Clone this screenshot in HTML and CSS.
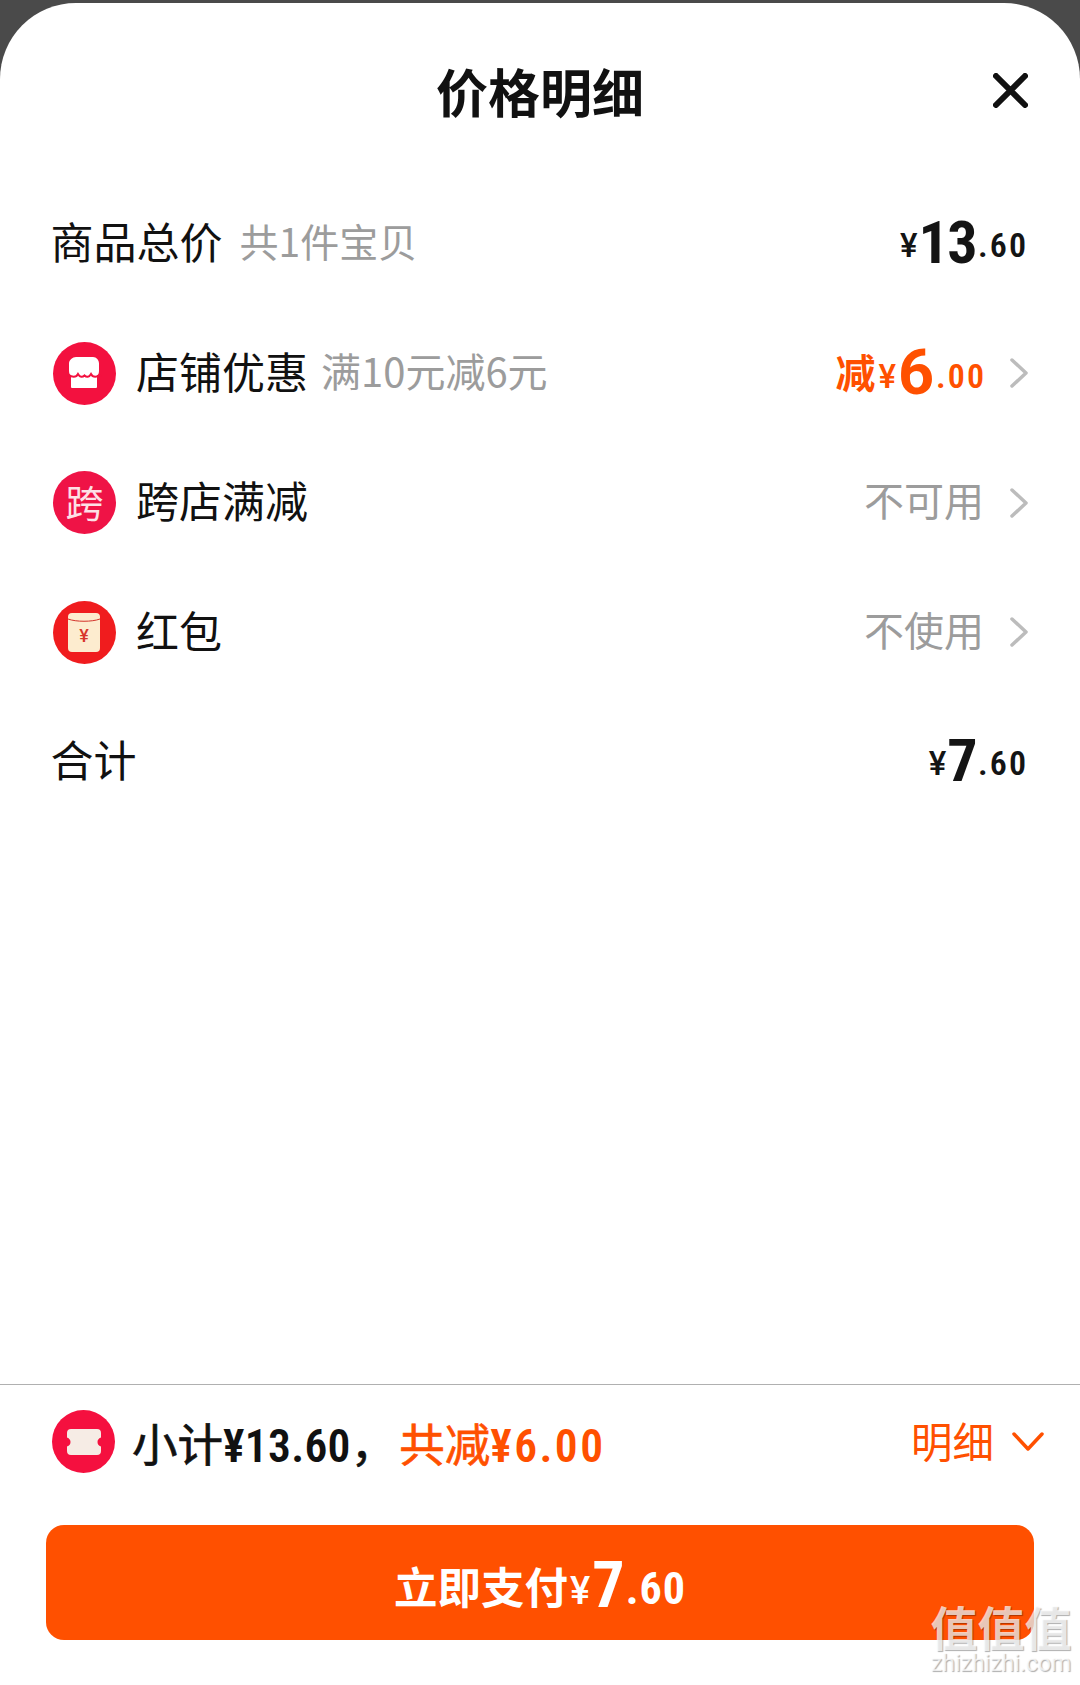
FILE: index.html
```html
<!DOCTYPE html>
<html lang="zh-CN">
<head>
<meta charset="utf-8">
<title>价格明细</title>
<link rel="stylesheet" href="styles.css">
</head>
<body>
<main class="sheet">
  <header class="head">
    <h1 class="title">价格明细</h1>
    <svg class="close" viewBox="0 0 35 35"><path d="M3 3 32 32M32 3 3 32"/></svg>
  </header>
  <section class="list">
    <div class="row">
      <div class="left"><span class="label plain">商品总价</span><span class="sub">共1件宝贝</span></div>
      <div class="right"><span class="amount"><span class="cur">¥</span><span class="big">13</span><span class="dec">.60</span></span></div>
    </div>
    <div class="row">
      <div class="left">
        <svg class="badge" viewBox="0 0 63 63"><circle cx="31.5" cy="31.5" r="31.5" fill="#f3113f"/><path fill="#fff" d="M23 15h17c3.500 0 6 3 6 6.500V29c0 3-1.500 4-1.500 4H44v12a1 1 0 0 1-1 1H19a1 1 0 0 1-1-1V33h-.5S16 32 16 29v-7.500C16 18 19.500 15 23 15z"/><path fill="none" stroke="#f3113f" stroke-width="2" d="M15 33c4 2 8 3 10-1 2 3.500 4.500 3.500 6.500 1.500 2 2 4.500 2 6.500-1.500 2 4 6 3 10 1"/></svg>
        <span class="label">店铺优惠</span><span class="sub sub-wide">满10元减6元</span>
      </div>
      <div class="right"><span class="amount hot"><span class="jian">减</span><span class="cur">¥</span><span class="big">6</span><span class="dec">.00</span></span><svg class="chev" viewBox="0 0 18 30"><path d="M2 2 16 15 2 28"/></svg></div>
    </div>
    <div class="row">
      <div class="left">
        <span class="badge kua">跨</span>
        <span class="label">跨店满减</span>
      </div>
      <div class="right"><span class="state">不可用</span><svg class="chev" viewBox="0 0 18 30"><path d="M2 2 16 15 2 28"/></svg></div>
    </div>
    <div class="row">
      <div class="left">
        <svg class="badge" viewBox="0 0 63 63"><circle cx="31.5" cy="31.5" r="31.5" fill="#f01c1e"/><rect x="15" y="12" width="32" height="39" rx="4" fill="#fdeccf"/><path d="M15 18c8 3 24 3 32 0" fill="none" stroke="#d4322a" stroke-width="1"/><text x="31" y="41" class="yen">¥</text></svg>
        <span class="label">红包</span>
      </div>
      <div class="right"><span class="state">不使用</span><svg class="chev" viewBox="0 0 18 30"><path d="M2 2 16 15 2 28"/></svg></div>
    </div>
    <div class="row">
      <div class="left"><span class="label plain">合计</span></div>
      <div class="right"><span class="amount"><span class="cur">¥</span><span class="big">7</span><span class="dec">.60</span></span></div>
    </div>
  </section>
  <footer class="foot">
    <div class="summary">
      <div class="sum-left">
        <svg class="badge" viewBox="0 0 63 63"><circle cx="31.500" cy="31.500" r="31.500" fill="#f5103f"/><path fill="#f6ece5" d="M19 19h26a4 4 0 0 1 4 4v4.500c-2.500 1-3.500 2.500-3.500 4.500s1 3.500 3.500 4.500V41a4 4 0 0 1-4 4H19a4 4 0 0 1-4-4v-4.500c2.500-1 3.500-2.500 3.500-4.500s-1-3.500-3.500-4.500V23a4 4 0 0 1 4-4z"/></svg>
        <span class="sum-text">小计<span class="sum-num">¥13.60</span>，<span class="sum-hot">共减<span class="sum-num">¥6.00</span></span></span>
      </div>
      <div class="detail"><span>明细</span><svg class="chev-down" viewBox="0 0 32 20"><path d="M2 2 16 17 30 2"/></svg></div>
    </div>
    <button class="pay"><span class="pay-zh">立即支付</span><span class="pay-cur">¥</span><span class="pay-big">7</span><span class="pay-dec">.60</span></button>
  </footer>
  <div class="mark"><div class="mark-zh">值值值</div><div class="mark-en">zhizhizhi.com</div></div>
</main>
</body>
</html>
```
FILE: styles.css
```css
* { box-sizing: border-box; }
html, body { margin: 0; height: 1685px; }
body {
  width: 1080px;
  background: #4a4a4a;
  padding-top: 3px;
  font-family: "Noto Sans CJK SC", "Noto Sans", sans-serif;
  color: #111;
  overflow: hidden;
}
.sheet {
  position: relative;
  height: 1682px;
  background: #fff;
  border-radius: 76px 76px 0 0;
  display: flex;
  flex-direction: column;
}
.head {
  position: relative;
  height: 176px;
  padding-top: 53px;
  text-align: center;
}
.title {
  margin: 0;
  font-size: 52px;
  line-height: 70px;
  font-weight: 700;
}
.close {
  position: absolute;
  top: 70px;
  right: 52px;
  width: 35px;
  height: 35px;
  fill: none;
  stroke: #111;
  stroke-width: 6;
  stroke-linecap: round;
}
.list { display: flex; flex-direction: column; }
.row {
  height: 129.500px;
  padding: 0 52px;
  display: flex;
  align-items: center;
  justify-content: space-between;
}
.left { display: flex; align-items: center; }
.right { display: flex; align-items: center; }
.label { font-size: 43px; line-height: 60px; margin-top: -7px; }
.plain { margin-left: -1.500px; }
.sub { margin-left: 17px; font-size: 39px; line-height: 60px; color: #9c9c9c; margin-top: -7px; }
.sub-wide { margin-left: 13px; font-size: 40px; }
.badge {
  width: 63px;
  height: 63px;
  flex: none;
  margin-right: 20px;
  margin-left: 1px;
}
.kua {
  border-radius: 50%;
  background: #ef1346;
  color: #fde0e6;
  font-size: 38px;
  line-height: 60px;
  text-align: center;
}
.yen { font-family: "Roboto", sans-serif; font-size: 18px; font-weight: 500; fill: #d8352c; text-anchor: middle; }
.amount {
  display: block;
  margin-top: 7px;
  font-family: "Roboto", sans-serif;
  font-stretch: 75%;
  font-weight: 600;
  color: #141414;
  line-height: 60px;
  white-space: nowrap;
}
.cur { font-size: 33px; font-stretch: 100%; font-weight: 500; margin-right: 1px; }
.big { font-size: 60px; font-weight: 700; letter-spacing: -1.500px; vertical-align: -6px; }
.hot .big { font-size: 63px; font-stretch: 90%; letter-spacing: 0; margin-left: 1px; }
.dec { font-size: 34px; margin-left: 2px; letter-spacing: 2px; }
.hot { color: #ff5000; }
.jian { font-family: "Noto Sans CJK SC", sans-serif; font-stretch: normal; font-size: 40px; font-weight: 700; margin-right: 3px; }
.state { font-size: 40px; line-height: 60px; color: #9c9c9c; margin-top: -7px; margin-right: 2px; }
.chev {
  width: 18px;
  height: 30px;
  margin-left: 24px;
  fill: none;
  stroke: #bcbcbc;
  stroke-width: 3.500;
  stroke-linecap: round;
  stroke-linejoin: round;
}
.foot {
  margin-top: auto;
  border-top: 1px solid #b0b0b0;
  padding: 0 46px 45px;
}
.summary {
  height: 140px;
  display: flex;
  align-items: flex-start;
  justify-content: space-between;
  padding: 19px 0 0 6px;
}
.sum-left { display: flex; align-items: center; }
.sum-left .badge { margin: 0 17px 0 0; }
.sum-text {
  font-size: 45.500px;
  line-height: 64px;
  -webkit-text-stroke: 0.7px currentColor;
  margin-top: 6px;
}
.sum-num { font-family: "Roboto", sans-serif; font-stretch: 75%; font-weight: 600; -webkit-text-stroke: 0; letter-spacing: 0.300px; }
.sum-hot { color: #ff5000; margin-left: 3px; }
.sum-hot .sum-num { letter-spacing: 2.400px; }
.detail {
  display: flex;
  align-items: center;
  color: #ff5000;
  font-size: 41.500px;
  line-height: 60px;
  margin-right: -10px;
  margin-top: 6px;
}
.chev-down {
  width: 32px;
  height: 20px;
  margin-left: 18px;
  margin-top: 4px;
  fill: none;
  stroke: #ff5000;
  stroke-width: 3.500;
  stroke-linecap: round;
  stroke-linejoin: round;
}
.pay {
  width: 988px;
  height: 115px;
  border: 0;
  border-radius: 18px;
  background: #ff5000;
  color: #fff;
  display: block;
  padding: 19px 0 0;
  line-height: 70px;
  white-space: nowrap;
  text-align: center;
  font-family: "Noto Sans CJK SC", sans-serif;
  font-weight: 700;
}
.pay-zh { font-size: 43.500px; }
.pay-cur, .pay-big, .pay-dec { font-family: "Roboto", sans-serif; font-stretch: 75%; }
.pay-cur { font-size: 38px; font-stretch: 100%; font-weight: 500; margin: 0 2px; }
.pay-big { font-size: 64px; vertical-align: -3px; }
.pay-dec { font-size: 44px; letter-spacing: 1px; margin-left: 1px; }
.mark {
  position: absolute;
  right: 8px;
  bottom: 8px;
  width: 142px;
  text-align: center;
  color: rgba(255, 255, 255, 0.72);
  text-shadow: 1px 1px 1px rgba(0, 0, 0, 0.32);
  pointer-events: none;
}
.mark-zh { font-size: 47px; line-height: 50px; font-weight: 700; white-space: nowrap; }
.mark-en { font-family: "Roboto", sans-serif; font-size: 23px; line-height: 26px; white-space: nowrap; }
```
